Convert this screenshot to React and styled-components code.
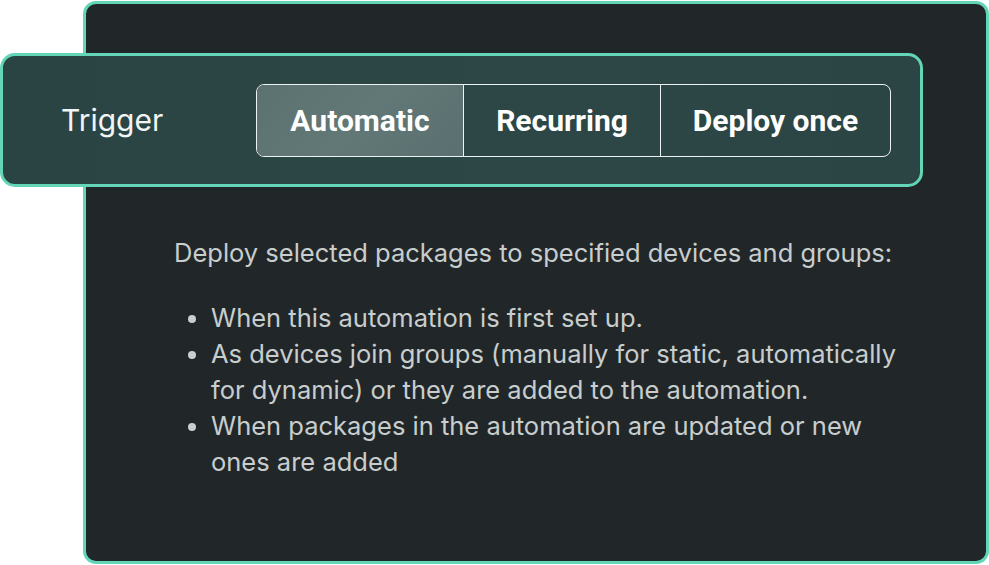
import React from 'react';
import styled, { createGlobalStyle } from 'styled-components';

const GlobalStyle = createGlobalStyle`
  html, body {
    margin: 0;
    padding: 0;
    background: #ffffff;
  }
  body {
    font-family: Inter, "Noto Sans", sans-serif;
  }
`;

const options = [
  { label: 'Automatic', w: 206 },
  { label: 'Recurring', w: 197 },
  { label: 'Deploy once', w: 230 },
];
const bullets = [
  'When this automation is first set up.',
  'As devices join groups (manually for static, automatically for dynamic) or they are added to the automation.',
  'When packages in the automation are updated or new ones are added',
];

const App = () => {
  return (
    <Page>
      <GlobalStyle />
      <Card>
        <TriggerBar>
          <TriggerLabel>Trigger</TriggerLabel>
          <Segmented>
            {options.map((opt, i) => (
              <Segment key={opt.label} active={i === 0} w={opt.w}>
                {opt.label}
              </Segment>
            ))}
          </Segmented>
        </TriggerBar>
        <Body>
          <Intro>Deploy selected packages to specified devices and groups:</Intro>
          <List>
            {bullets.map((b) => (
              <Item key={b}>{b}</Item>
            ))}
          </List>
        </Body>
      </Card>
    </Page>
  );
};

export default App;

const Page = styled.div`
  width: 989px;
  height: 565px;
  padding: 1px 0 0 83px;
  box-sizing: border-box;
`;

const Card = styled.div`
  width: 906px;
  height: 563px;
  box-sizing: border-box;
  border: 3px solid #62d6b6;
  border-radius: 13px;
  background: #212729;
  padding-top: 49px;
`;

const TriggerBar = styled.div`
  display: flex;
  align-items: center;
  width: 923px;
  height: 134px;
  box-sizing: border-box;
  margin-left: -86px;
  border: 3px solid #62d6b6;
  border-radius: 15px;
  background: linear-gradient(90deg, #2a4443 0%, #2c4746 60%, #2b4545 100%);
  padding-left: 58px;
`;

const TriggerLabel = styled.div`
  font-family: Inter, sans-serif;
  font-size: 30px;
  color: #f2f5f5;
  width: 195px;
`;

const Segmented = styled.div`
  display: flex;
  height: 73px;
  box-sizing: border-box;
  border: 1.5px solid #edf2f2;
  border-radius: 8px;
  overflow: hidden;
`;

const Segment = styled.div`
  width: ${(p) => p.w}px;
  box-sizing: border-box;
  display: flex;
  align-items: center;
  justify-content: center;
  font-family: Roboto, sans-serif;
  font-weight: 700;
  font-size: 30px;
  color: #ffffff;
  background: ${(p) =>
    p.active ? 'linear-gradient(135deg, #5b7271 0%, #627877 50%, #5a7070 100%)' : 'transparent'};
  & + & {
    border-left: 1.5px solid #edf2f2;
  }
`;

const Body = styled.div`
  padding: 48px 0 0 88px;
  color: #c8cdce;
  font-family: Inter, sans-serif;
  font-size: 25.5px;
`;

const Intro = styled.p`
  margin: 0;
  line-height: 36px;
`;

const List = styled.ul`
  margin: 29px 0 0;
  padding-left: 37px;
  width: 700px;
`;

const Item = styled.li`
  line-height: 36px;
`;
